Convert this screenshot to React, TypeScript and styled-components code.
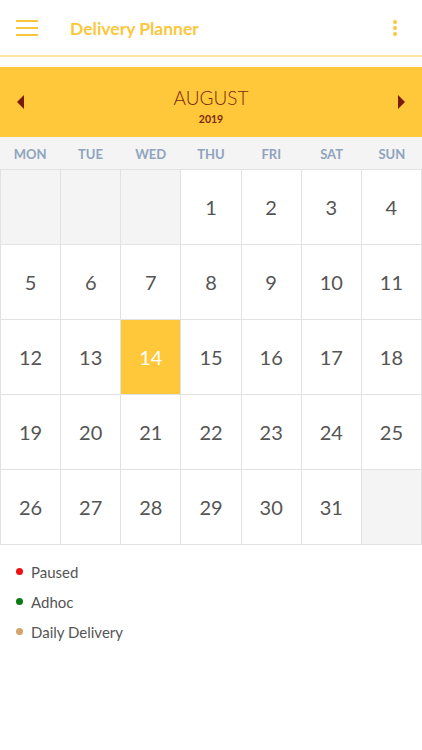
import styled, { createGlobalStyle } from "styled-components";

const GlobalStyle = createGlobalStyle`
  body {
    margin: 0;
    background: #ffffff;
    font-family: Lato, "Open Sans", sans-serif;
  }
`;

const Page = styled.div`
  width: 422px;
  min-height: 750px;
  background: #ffffff;
`;

const TopBar = styled.div`
  height: 57px;
  display: flex;
  align-items: center;
  padding: 0 16px;
  border-bottom: 2px solid #fde4a0;
  box-sizing: border-box;
`;

const IconButton = styled.div`
  width: 22px;
  height: 22px;
  display: flex;
  align-items: center;
  justify-content: center;
`;

const Title = styled.div`
  flex: 1;
  margin-left: 32px;
  color: #fcc73d;
  font-weight: 700;
  font-size: 17.5px;
  margin-top: 1px;
`;

const MonthBanner = styled.div`
  margin-top: 10px;
  height: 70px;
  background: #ffc83a;
  display: flex;
  align-items: center;
  justify-content: space-between;
  padding: 0 16px;
`;

const MonthText = styled.div`
  display: flex;
  flex-direction: column;
  align-items: center;
  color: #7a2a0c;
  margin-top: 8px;
`;

const MonthName = styled.div`
  font-size: 19px;
  font-weight: 300;
  line-height: 22px;
`;

const YearText = styled.div`
  font-size: 10.5px;
  font-weight: 700;
  line-height: 14px;
  margin-top: 3px;
`;

const WeekRow = styled.div`
  display: grid;
  grid-template-columns: repeat(7, 1fr);
  height: 32px;
  align-items: center;
  background: #f4f4f4;
`;

const WeekDay = styled.div`
  text-align: center;
  color: #8fa3bf;
  font-size: 13px;
  font-weight: 700;
  margin-top: 1px;
`;

const Grid = styled.div`
  display: grid;
  grid-template-columns: repeat(7, 1fr);
  border-top: 1px solid #e2e2e2;
  border-left: 1px solid #e2e2e2;
`;

const Cell = styled.div<{ $empty?: boolean; $selected?: boolean }>`
  height: 74px;
  border-right: 1px solid #e2e2e2;
  border-bottom: 1px solid #e2e2e2;
  display: flex;
  align-items: center;
  justify-content: center;
  font-size: 20px;
  color: ${(p) => (p.$selected ? "#ffffff" : "#555555")};
  background: ${(p) =>
    p.$selected ? "#ffc83a" : p.$empty ? "#f4f4f4" : "#ffffff"};
`;

const Legend = styled.div`
  padding: 17px 0 0 16px;
  display: flex;
  flex-direction: column;
  gap: 11px;
`;

const LegendItem = styled.div`
  display: flex;
  align-items: center;
  font-size: 15px;
  color: #555555;
  height: 19px;
`;

const Dot = styled.span<{ $color: string }>`
  width: 7px;
  height: 7px;
  border-radius: 50%;
  background: ${(p) => p.$color};
  margin-right: 8px;
`;

const days = ["MON", "TUE", "WED", "THU", "FRI", "SAT", "SUN"];

const cells: (number | null)[] = [
  null,
  null,
  null,
  ...Array.from({ length: 31 }, (_, i) => i + 1),
  null,
];

const legend = [
  { label: "Paused", color: "#ee1111" },
  { label: "Adhoc", color: "#0a7a12" },
  { label: "Daily Delivery", color: "#d4a468" },
];

const App = () => {
  return (
    <Page>
      <GlobalStyle />
      <TopBar>
        <IconButton>
          <svg width="22" height="18" viewBox="0 0 22 18">
            <rect x="0" y="1" width="22" height="2" fill="#fcc73d" />
            <rect x="0" y="8" width="22" height="2" fill="#fcc73d" />
            <rect x="0" y="15" width="22" height="2" fill="#fcc73d" />
          </svg>
        </IconButton>
        <Title>Delivery Planner</Title>
        <IconButton>
          <svg width="6" height="18" viewBox="0 0 6 18">
            <circle cx="3" cy="3" r="2" fill="#fcc73d" />
            <circle cx="3" cy="9" r="2" fill="#fcc73d" />
            <circle cx="3" cy="15" r="2" fill="#fcc73d" />
          </svg>
        </IconButton>
      </TopBar>

      <MonthBanner>
        <svg width="10" height="14" viewBox="0 0 10 14">
          <polygon points="8,0 1,7 8,14" fill="#7a1a08" />
        </svg>
        <MonthText>
          <MonthName>AUGUST</MonthName>
          <YearText>2019</YearText>
        </MonthText>
        <svg width="10" height="14" viewBox="0 0 10 14">
          <polygon points="2,0 9,7 2,14" fill="#7a1a08" />
        </svg>
      </MonthBanner>

      <WeekRow>
        {days.map((d) => (
          <WeekDay key={d}>{d}</WeekDay>
        ))}
      </WeekRow>

      <Grid>
        {cells.map((n, i) => (
          <Cell key={i} $empty={n === null} $selected={n === 14}>
            {n}
          </Cell>
        ))}
      </Grid>

      <Legend>
        {legend.map((l) => (
          <LegendItem key={l.label}>
            <Dot $color={l.color} />
            {l.label}
          </LegendItem>
        ))}
      </Legend>
    </Page>
  );
};

export default App;
